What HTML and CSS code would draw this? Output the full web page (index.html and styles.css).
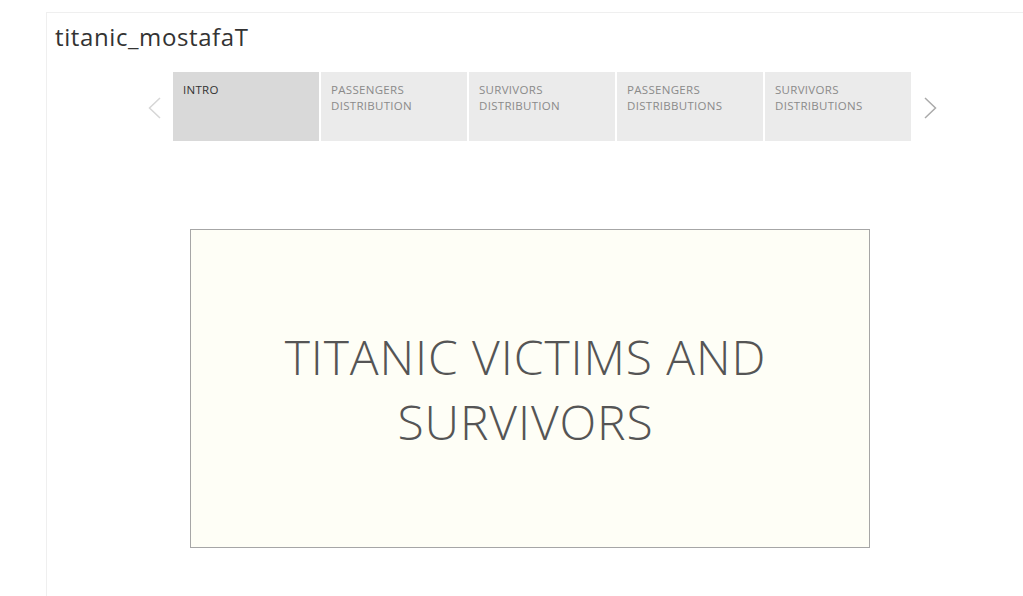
FILE: index.html
```html
<!DOCTYPE html>
<html>
<head>
<meta charset="utf-8">
<link rel="stylesheet" href="styles.css">
</head>
<body>
<div class="frame">
  <h1 class="title">titanic_mostafaT</h1>
  <div class="story">
    <div class="nav">
      <span class="arrow prev">
        <svg width="13" height="22" viewBox="0 0 13 22"><path d="M12 1 L1.5 11 L12 21" fill="none" stroke="#d6d6d6" stroke-width="1.5"/></svg>
      </span>
      <div class="tabs">
        <div class="tab active">INTRO</div>
        <div class="tab">PASSENGERS<br>DISTRIBUTION</div>
        <div class="tab">SURVIVORS<br>DISTRIBUTION</div>
        <div class="tab">PASSENGERS<br>DISTRIBBUTIONS</div>
        <div class="tab">SURVIVORS<br>DISTRIBUTIONS</div>
      </div>
      <span class="arrow next">
        <svg width="13" height="22" viewBox="0 0 13 22"><path d="M1 1 L11.5 11 L1 21" fill="none" stroke="#aaaaaa" stroke-width="1.5"/></svg>
      </span>
    </div>
    <div class="card">
      <p class="headline">TITANIC VICTIMS AND<br>SURVIVORS</p>
    </div>
  </div>
</div>
</body>
</html>
```

FILE: styles.css
```css
html, body {
  margin: 0;
  padding: 0;
  background: #ffffff;
  height: 100%;
  overflow: hidden;
}
body {
  font-family: "Open Sans", "Noto Sans", sans-serif;
}
.frame {
  margin: 12px 0 0 46px;
  border-left: 1px solid #efefef;
  border-top: 1px solid #efefef;
  height: 600px;
}
.title {
  margin: 0;
  padding: 9px 0 0 8px;
  font-size: 24px;
  font-weight: 400;
  color: #333333;
  line-height: 30px;
  letter-spacing: 0.6px;
  height: 48px;
  box-sizing: border-box;
}
.story {
  padding-left: 88px;
}
.nav {
  display: flex;
  align-items: center;
  height: 69px;
  margin-top: 11px;
}
.arrow {
  display: flex;
  width: 38px;
  justify-content: center;
  padding-top: 2px;
}
.tabs {
  display: flex;
  gap: 2px;
  height: 69px;
}
.tab {
  width: 146px;
  box-sizing: border-box;
  padding: 10px 10px;
  background: #ebebeb;
  color: #8a8a8a;
  font-size: 11.5px;
  line-height: 16px;
  letter-spacing: 0.3px;
}
.tab.active {
  background: #d9d9d9;
  color: #333333;
}
.card {
  margin: 88px 0 0 55px;
  width: 680px;
  height: 319px;
  box-sizing: border-box;
  border: 1px solid #a6a6a6;
  background: #fefef6;
  display: flex;
  align-items: center;
  justify-content: center;
  padding-right: 9px;
}
.headline {
  margin: 0;
  text-align: center;
  font-size: 48px;
  font-weight: 300;
  line-height: 65px;
  color: #555555;
  letter-spacing: 0.9px;
}
```
